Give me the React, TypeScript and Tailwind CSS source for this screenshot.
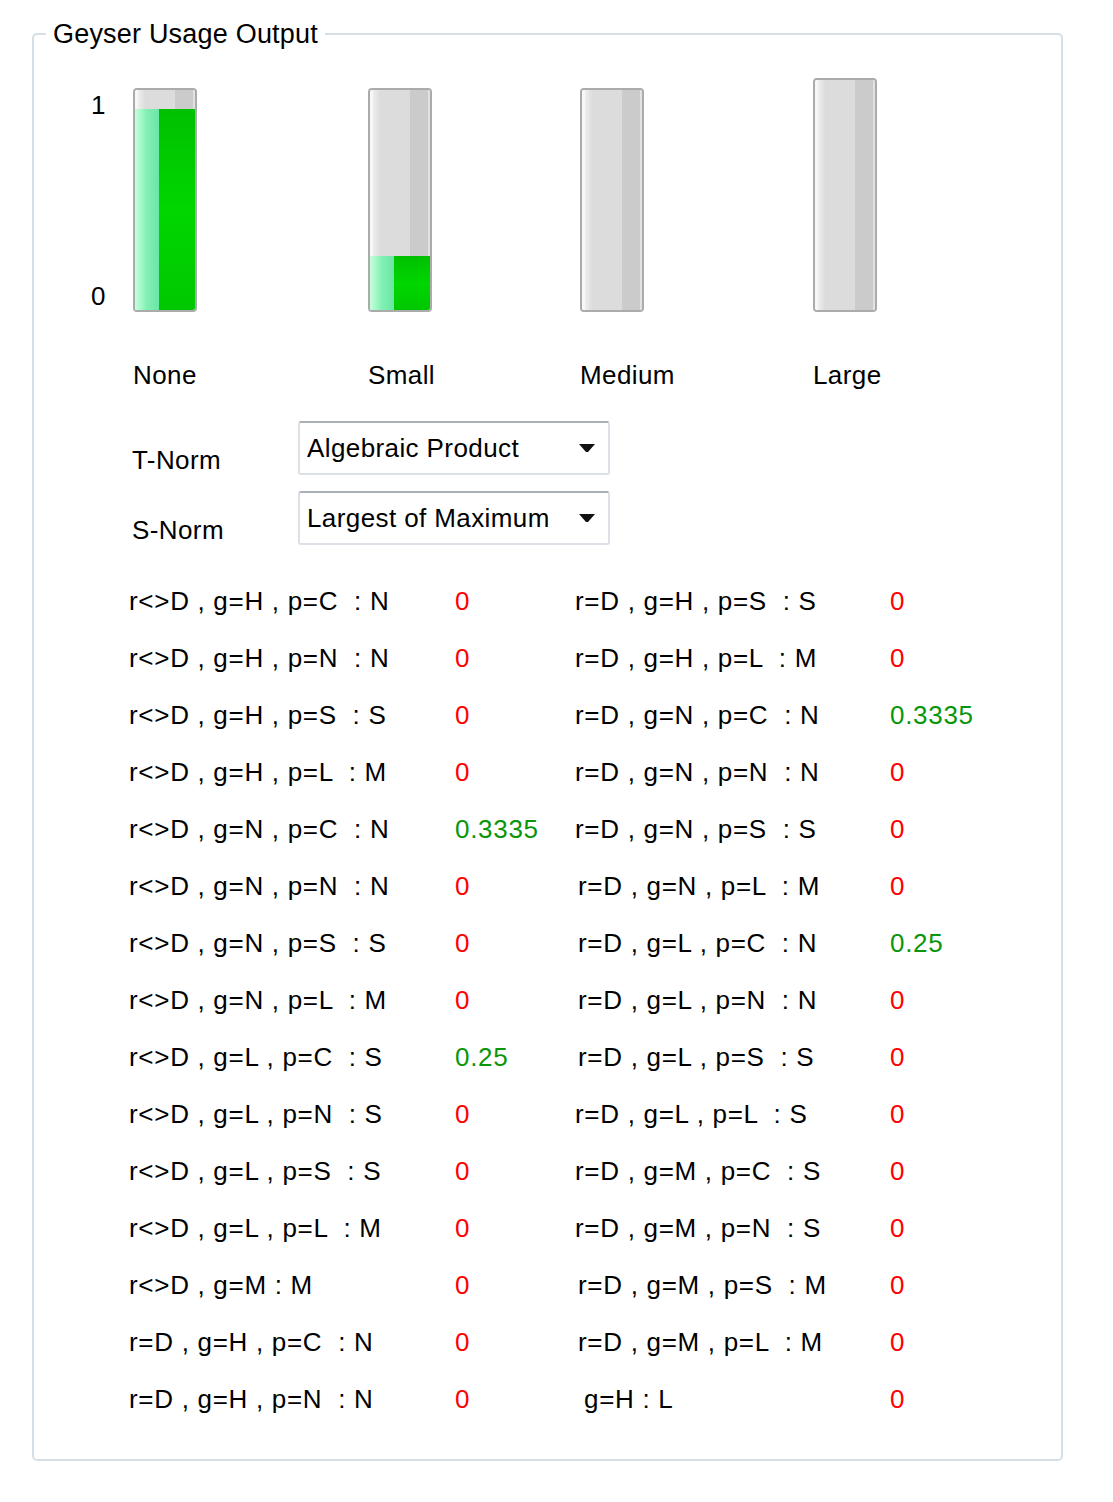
import React from "react";

type Rule = { text: string; value: string; shift?: string };

const leftRules: Rule[] = [
  { text: "r<>D , g=H , p=C  : N", value: "0" },
  { text: "r<>D , g=H , p=N  : N", value: "0" },
  { text: "r<>D , g=H , p=S  : S", value: "0" },
  { text: "r<>D , g=H , p=L  : M", value: "0" },
  { text: "r<>D , g=N , p=C  : N", value: "0.3335" },
  { text: "r<>D , g=N , p=N  : N", value: "0" },
  { text: "r<>D , g=N , p=S  : S", value: "0" },
  { text: "r<>D , g=N , p=L  : M", value: "0" },
  { text: "r<>D , g=L , p=C  : S", value: "0.25" },
  { text: "r<>D , g=L , p=N  : S", value: "0" },
  { text: "r<>D , g=L , p=S  : S", value: "0" },
  { text: "r<>D , g=L , p=L  : M", value: "0" },
  { text: "r<>D , g=M : M", value: "0" },
  { text: "r=D , g=H , p=C  : N", value: "0" },
  { text: "r=D , g=H , p=N  : N", value: "0" },
];

const rightRules: Rule[] = [
  { text: "r=D , g=H , p=S  : S", value: "0" },
  { text: "r=D , g=H , p=L  : M", value: "0" },
  { text: "r=D , g=N , p=C  : N", value: "0.3335" },
  { text: "r=D , g=N , p=N  : N", value: "0" },
  { text: "r=D , g=N , p=S  : S", value: "0" },
  { text: "r=D , g=N , p=L  : M", value: "0", shift: "ml-[3px]" },
  { text: "r=D , g=L , p=C  : N", value: "0.25", shift: "ml-[3px]" },
  { text: "r=D , g=L , p=N  : N", value: "0", shift: "ml-[3px]" },
  { text: "r=D , g=L , p=S  : S", value: "0", shift: "ml-[3px]" },
  { text: "r=D , g=L , p=L  : S", value: "0" },
  { text: "r=D , g=M , p=C  : S", value: "0" },
  { text: "r=D , g=M , p=N  : S", value: "0" },
  { text: "r=D , g=M , p=S  : M", value: "0", shift: "ml-[3px]" },
  { text: "r=D , g=M , p=L  : M", value: "0", shift: "ml-[3px]" },
  { text: "g=H : L", value: "0", shift: "ml-[9px]" },
];

// height of the green part, in px of the 220px inner area
const bars = [
  { label: "None", fill: 201, tall: false, gap: "ml-0" },
  { label: "Small", fill: 54, tall: false, gap: "ml-[171px]" },
  { label: "Medium", fill: 0, tall: false, gap: "ml-[148px]" },
  { label: "Large", fill: 0, tall: true, gap: "ml-[169px]" },
];

function Bar({ fill, tall }: { fill: number; tall: boolean }) {
  return (
    <div
      className={`relative w-[64px] ${tall ? "h-[234px]" : "h-[224px]"} rounded-[4px] border-2 border-[#ababab] overflow-hidden`}
    >
      <div className="flex h-full">
        <div className="w-[3px] bg-[#f7f7f7]" />
        <div className="w-[7px] bg-linear-to-r from-[#eeeeee] to-[#dddddd]" />
        <div className="flex-1 bg-[#dcdcdc]" />
        <div className="w-[18px] bg-[#cbcbcb]" />
        <div className="w-[2px] bg-[#e2e2e2]" />
      </div>
      {fill > 0 && (
        <div className="absolute bottom-0 left-0 right-0 flex" style={{ height: `${fill}px` }}>
          <div className="w-[24px] bg-linear-to-r from-[#c4ffda] via-[#80f0b4] to-[#6be6a4]" />
          <div className="flex-1 bg-linear-to-b from-[#00c000] via-[#00d600] to-[#00c800]" />
        </div>
      )}
    </div>
  );
}

function Combo({ value }: { value: string }) {
  return (
    <div className="w-[312px] h-[54px] flex items-center justify-between pl-[7px] pr-[12px] bg-white rounded-[3px] border-2 border-[#dbe1e7] border-t-[#a9b0b8]">
      <span className="whitespace-nowrap">{value}</span>
      <svg width="18" height="10" viewBox="0 0 18 10">
        <path d="M1 1h16l-7 8h-2z" fill="#111" />
      </svg>
    </div>
  );
}

function Value({ v }: { v: string }) {
  return (
    <div className={`h-[57px] flex items-center ${v === "0" ? "text-[#ff0000]" : "text-[#0a960a]"}`}>
      {v}
    </div>
  );
}

export default function App() {
  return (
    <div className="w-[1113px] h-[1502px] bg-white text-black font-['Liberation_Sans',Arial,sans-serif] text-[26px] leading-[30px] tracking-[0.4px] pt-[19px]">
      <fieldset className="ml-[32px] w-[1031px] border-2 border-[#d5dfe5] rounded-[5px] pb-[32px]">
        <legend className="ml-[12px] px-[7px] text-[27px] leading-[30px] tracking-[0.2px]">Geyser Usage Output</legend>

        {/* bars */}
        <div className="flex mt-[29px]">
          <div className="ml-[57px] w-[42px] h-[234px] flex flex-col justify-between pt-[12px] pb-[1px]">
            <span>1</span>
            <span>0</span>
          </div>
          {bars.map((b) => (
            <div key={b.label} className={`w-[64px] flex flex-col ${b.gap}`}>
              <div className="h-[234px] flex items-end">
                <Bar fill={b.fill} tall={b.tall} />
              </div>
              <div className="mt-[48px] whitespace-nowrap">{b.label}</div>
            </div>
          ))}
        </div>

        {/* norms */}
        <div className="flex mt-[31px] ml-[98px]">
          <div className="w-[166px] pt-[24px]">T-Norm</div>
          <Combo value="Algebraic Product" />
        </div>
        <div className="flex mt-[16px] ml-[98px]">
          <div className="w-[166px] pt-[24px]">S-Norm</div>
          <Combo value="Largest of Maximum" />
        </div>

        {/* rule strengths */}
        <div className="grid grid-cols-[326px_120px_315px_1fr] mt-[27px] ml-[95px] tracking-[0.7px]">
          {leftRules.map((l, i) => {
            const r = rightRules[i];
            return (
              <React.Fragment key={i}>
                <div className="h-[57px] flex items-center whitespace-pre">{l.text}</div>
                <Value v={l.value} />
                <div className={`h-[57px] flex items-center whitespace-pre ${r.shift ?? ""}`}>{r.text}</div>
                <Value v={r.value} />
              </React.Fragment>
            );
          })}
        </div>
      </fieldset>
    </div>
  );
}
